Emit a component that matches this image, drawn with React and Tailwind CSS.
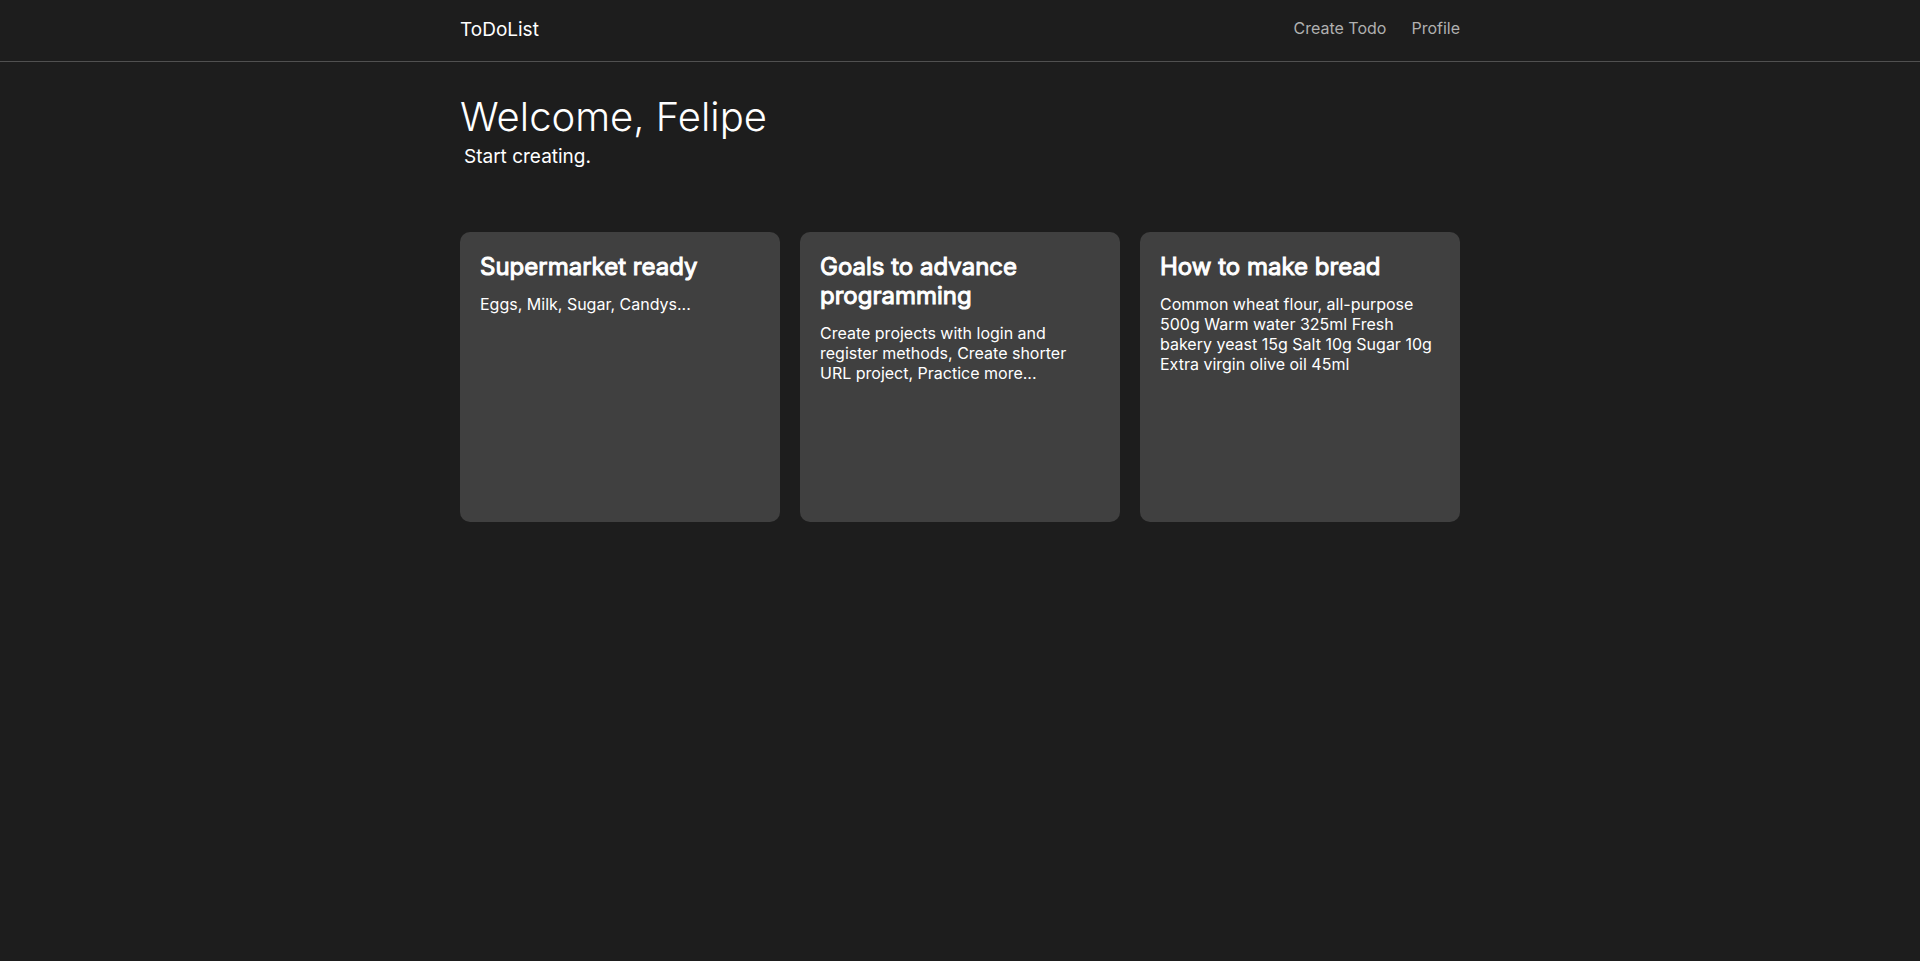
const todos = [
  { title: 'Supermarket ready', text: 'Eggs, Milk, Sugar, Candys...' },
  {
    title: 'Goals to advance programming',
    text: 'Create projects with login and register methods, Create shorter URL project, Practice more...',
  },
  {
    title: 'How to make bread',
    text: 'Common wheat flour, all-purpose 500g Warm water 325ml Fresh bakery yeast 15g Salt 10g Sugar 10g Extra virgin olive oil 45ml',
  },
];

function Header() {
  return (
    <header className="border-b border-[#505050]">
      <div className="mx-auto flex max-w-[1000px] items-start justify-between pt-4 pb-[17px]">
        <a href="#" className="text-[19px] leading-7">ToDoList</a>
        <nav className="flex gap-[25px] text-base leading-6 text-[#b0b0b0]">
          <a href="#create">Create Todo</a>
          <a href="#profile">Profile</a>
        </nav>
      </div>
    </header>
  );
}

function TodoCard({ title, text }) {
  return (
    <article className="min-h-[290px] rounded-[10px] bg-[#404040] p-5">
      <h2 className="mb-[13px] text-2xl leading-[29px] font-normal [-webkit-text-stroke:1px_white]">{title}</h2>
      <p className="text-base leading-5">{text}</p>
    </article>
  );
}

export default function App() {
  return (
    <div className="min-h-screen bg-[#1d1d1d] font-['Inter',sans-serif] text-white">
      <Header />
      <main className="mx-auto max-w-[1000px] pt-[31px]">
        <h1 className="mb-1 text-[40px] leading-[48px] font-light">Welcome, Felipe</h1>
        <p className="pl-1 text-[19px] leading-6">Start creating.</p>
        <section className="mt-[63px] grid grid-cols-3 gap-5">
          {todos.map((todo) => (
            <TodoCard key={todo.title} {...todo} />
          ))}
        </section>
      </main>
    </div>
  );
}
